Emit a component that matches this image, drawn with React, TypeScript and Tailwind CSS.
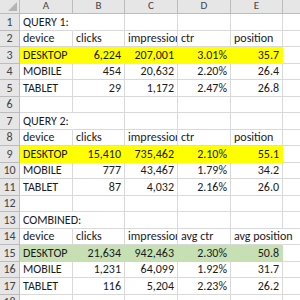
import React from "react";

type Row = { cells: string[]; fill?: "yellow" | "green"; title?: boolean };

const rows: Row[] = [
  { cells: ["QUERY 1:"], title: true },
  { cells: ["device", "clicks", "impressions", "ctr", "position"] },
  { cells: ["DESKTOP", "6,224", "207,001", "3.01%", "35.7"], fill: "yellow" },
  { cells: ["MOBILE", "454", "20,632", "2.20%", "26.4"] },
  { cells: ["TABLET", "29", "1,172", "2.47%", "26.8"] },
  { cells: [] },
  { cells: ["QUERY 2:"], title: true },
  { cells: ["device", "clicks", "impressions", "ctr", "position"] },
  { cells: ["DESKTOP", "15,410", "735,462", "2.10%", "55.1"], fill: "yellow" },
  { cells: ["MOBILE", "777", "43,467", "1.79%", "34.2"] },
  { cells: ["TABLET", "87", "4,032", "2.16%", "26.0"] },
  { cells: [] },
  { cells: ["COMBINED:"], title: true },
  { cells: ["device", "clicks", "impressions", "avg ctr", "avg position"] },
  { cells: ["DESKTOP", "21,634", "942,463", "2.30%", "50.8"], fill: "green" },
  { cells: ["MOBILE", "1,231", "64,099", "1.92%", "31.7"] },
  { cells: ["TABLET", "116", "5,204", "2.23%", "26.2"] },
  { cells: [] },
];

const cols = ["A", "B", "C", "D", "E", "F"];

function isNum(s: string) {
  return /^[0-9.,%]+$/.test(s);
}

export default function App() {
  return (
    <div
      className="w-[300px] h-[300px] overflow-hidden bg-white text-[#1b1b1b]"
      style={{ fontFamily: "Carlito, Roboto, sans-serif" }}
    >
      <div className="grid grid-cols-[20px_53px_52px_53px_53px_52px_60px] grid-rows-[14px_repeat(18,16.5px)]">
        <div className="relative bg-[#e6e6e6] border-r border-b border-[#bcbcbc]">
          <div className="absolute right-[2px] bottom-[2px] w-0 h-0 border-l-[9px] border-l-transparent border-b-[9px] border-b-[#b4b4b4]" />
        </div>
        {cols.map((c) => (
          <div
            key={c}
            className="bg-[#e6e6e6] border-r border-b border-[#bcbcbc] flex items-center justify-center text-[11px] text-[#444]"
          >
            {c}
          </div>
        ))}
        {rows.map((r, i) => (
          <React.Fragment key={i}>
            <div className="bg-[#e6e6e6] border-r border-b border-[#bcbcbc] flex items-center justify-center text-[12px] text-[#444]">
              {i + 1}
            </div>
            {[0, 1, 2, 3, 4, 5].map((j) => {
              const v = r.cells[j] ?? "";
              const filled = r.fill && j < 5;
              const bg =
                r.fill === "yellow" && filled
                  ? "bg-[#ffff00] border-transparent"
                  : r.fill === "green" && filled
                  ? "bg-[#c6e0b4] border-transparent"
                  : "bg-white border-[#d9d9d9]";
              const overflowVisible = !!r.title || (i === 13 && j === 4);
              const hideRight = overflowVisible && v !== "";
              return (
                <div
                  key={j}
                  className={
                    "flex items-center whitespace-nowrap text-[12px] border-b border-r " +
                    bg +
                    (hideRight ? " !border-r-white" : "") +
                    (overflowVisible ? " overflow-visible" : " overflow-hidden") +
                    (isNum(v) ? " justify-end pr-[3px]" : " pl-[3px]")
                  }
                >
                  <span className="relative z-10">{v}</span>
                </div>
              );
            })}
          </React.Fragment>
        ))}
      </div>
    </div>
  );
}
